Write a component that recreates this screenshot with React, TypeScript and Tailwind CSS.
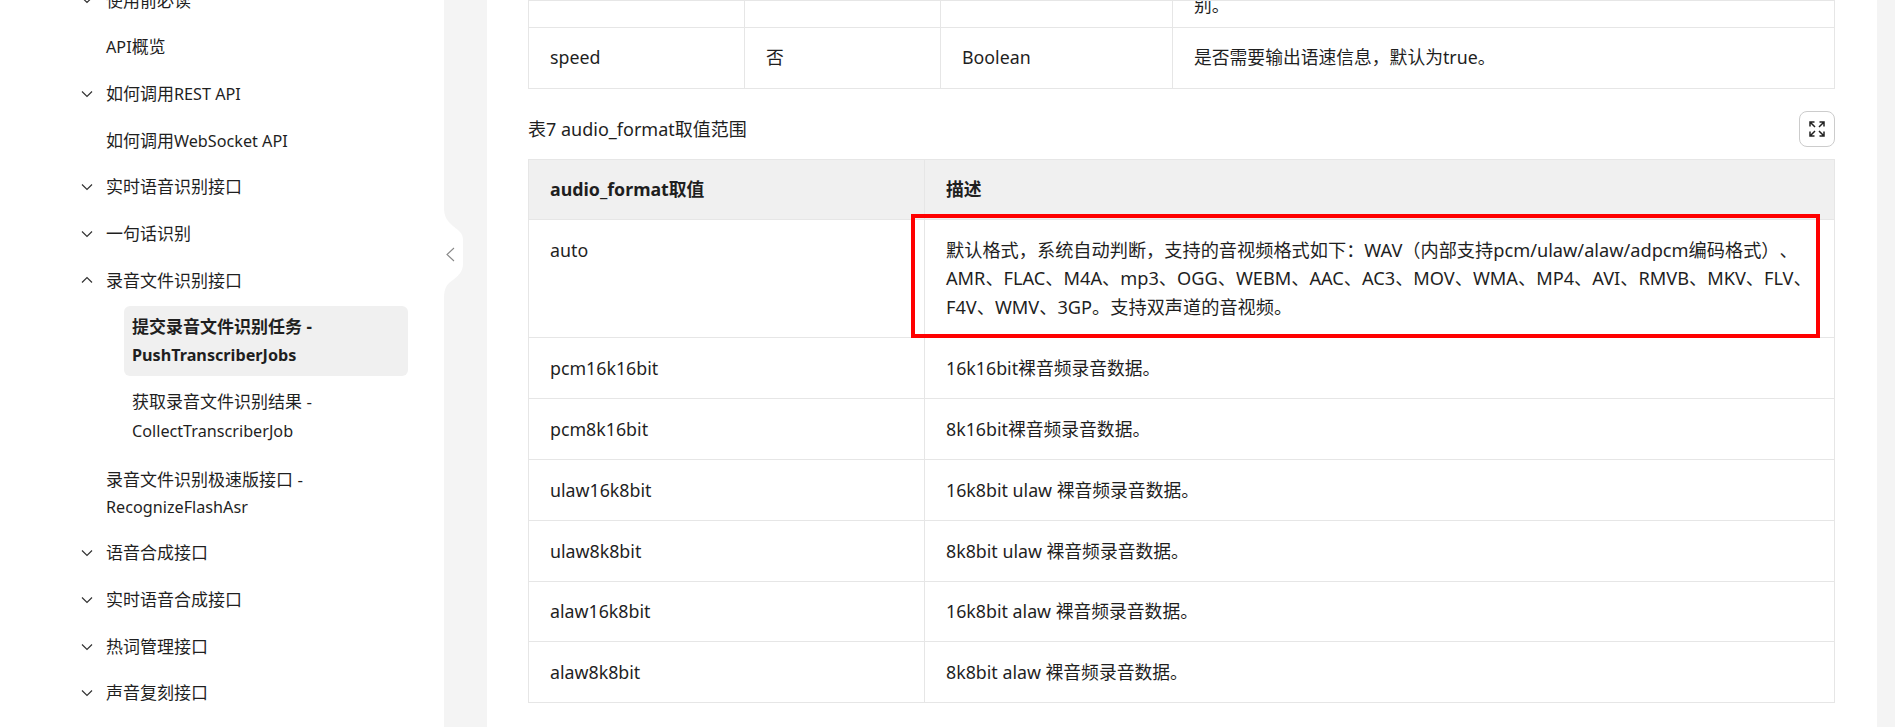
import React from "react";

const font = "font-['Noto_Sans','Noto_Sans_CJK_SC',sans-serif]";

function Chevron({ up }: { up?: boolean }) {
  return (
    <svg width="12" height="8" viewBox="0 0 12 8" fill="none" className="shrink-0" stroke="#333" strokeWidth="1.2">
      {up ? <path d="M1 6.5 L6 1.5 L11 6.5" /> : <path d="M1 1.5 L6 6.5 L11 1.5" />}
    </svg>
  );
}

function Latin({ children }: { children: React.ReactNode }) {
  return <span className="text-[16.2px]">{children}</span>;
}

function Item({ label, chevron, up }: { label: React.ReactNode; chevron?: boolean; up?: boolean }) {
  return (
    <div className="flex items-center h-[46.7px] pl-[81px]">
      <span className="w-[25px] flex">{chevron ? <Chevron up={up} /> : null}</span>
      <span>{label}</span>
    </div>
  );
}

function Sidebar() {
  return (
    <aside className="w-[444px] shrink-0 bg-white relative text-[17px] text-[#1f1f1f]">
      <div className="-mt-[23px] pr-[36px]">
        <Item label="使用前必读" chevron />
        <Item label={<><Latin>API</Latin>概览</>} />
        <Item label={<>如何调用<Latin>REST API</Latin></>} chevron />
        <Item label={<>如何调用<Latin>WebSocket API</Latin></>} />
        <Item label="实时语音识别接口" chevron />
        <Item label="一句话识别" chevron />
        <Item label="录音文件识别接口" chevron up />
        <div className="ml-[124px] mt-[2px] w-[284px] h-[70px] bg-[#f0f0f0] rounded-[6px] px-[8px] py-[7px] font-bold leading-[28px]">
          提交录音文件识别任务 - <Latin>PushTranscriberJobs</Latin>
        </div>
        <div className="ml-[124px] w-[284px] px-[8px] pt-[11px] pb-[10px] leading-[29px]">
          获取录音文件识别结果 - <Latin>CollectTranscriberJob</Latin>
        </div>
        <div className="pl-[106px] w-[420px] pt-[10px] pb-[8px] leading-[27.5px]">
          录音文件识别极速版接口 - <Latin>RecognizeFlashAsr</Latin>
        </div>
        <Item label="语音合成接口" chevron />
        <Item label="实时语音合成接口" chevron />
        <Item label="热词管理接口" chevron />
        <Item label="声音复刻接口" chevron />
      </div>
      <svg
        className="absolute left-[444px] top-[208px] z-10"
        width="20"
        height="90"
        viewBox="0 0 20 90"
        fill="#fff"
      >
        <path d="M0 0 C0 8 3 13 9 18 C15 23 19 25 19 32 L19 56 C19 64 14 68 9 72 C3 76 0 80 0 90 Z" />
        <path d="M10 40 L3 46.5 L10 53" fill="none" stroke="#888" strokeWidth="1.1" />
      </svg>
    </aside>
  );
}

function ExpandIcon() {
  return (
    <svg width="16" height="16" viewBox="0 0 16 16" fill="none" stroke="#222" strokeWidth="1.5">
      <path d="M1 5.5 V1 H5.5 M1 1 L6 6" />
      <path d="M15 5.5 V1 H10.5 M15 1 L10 6" />
      <path d="M1 10.5 V15 H5.5 M1 15 L6 10" />
      <path d="M15 10.5 V15 H10.5 M15 15 L10 10" />
    </svg>
  );
}

const rows: [string, string, string][] = [
  ["pcm16k16bit", "16k16bit裸音频录音数据。", "h-[61px]"],
  ["pcm8k16bit", "8k16bit裸音频录音数据。", "h-[61px]"],
  ["ulaw16k8bit", "16k8bit ulaw 裸音频录音数据。", "h-[61px]"],
  ["ulaw8k8bit", "8k8bit ulaw 裸音频录音数据。", "h-[61px]"],
  ["alaw16k8bit", "16k8bit alaw 裸音频录音数据。", "h-[60px]"],
  ["alaw8k8bit", "8k8bit alaw 裸音频录音数据。", "h-[61px]"],
];

const cell = "border border-[#e6e6e6] pl-[21px] pr-[21px] align-middle text-left";

function Main() {
  return (
    <main className="w-[1390px] shrink-0 bg-white pl-[41px] pr-[42px] text-[17.8px] text-[#1f1f1f]">
      <table className="w-full border-collapse table-fixed">
        <colgroup>
          <col className="w-[216px]" />
          <col className="w-[196px]" />
          <col className="w-[232px]" />
          <col />
        </colgroup>
        <tbody>
          <tr className="h-[27px]">
            <td className={cell}></td>
            <td className={cell}></td>
            <td className={cell}></td>
            <td className={`${cell} align-bottom`}>
              <div className="-mt-[10px] h-[16px] leading-[8px] overflow-hidden">别。</div>
            </td>
          </tr>
          <tr className="h-[61px]">
            <td className={`${cell} pb-[2px]`}>speed</td>
            <td className={`${cell} pb-[2px]`}>否</td>
            <td className={`${cell} pb-[2px]`}>Boolean</td>
            <td className={`${cell} pb-[2px]`}>是否需要输出语速信息，默认为true。</td>
          </tr>
        </tbody>
      </table>

      <div className="flex items-center justify-between h-[70px] pt-[22px] pb-[12px]">
        <span className="text-[18px]">表7 audio_format取值范围</span>
        <button className="w-[36px] h-[36px] rounded-[8px] border border-[#cccccc] flex items-center justify-center bg-white">
          <ExpandIcon />
        </button>
      </div>

      <div className="relative">
        <table className="w-full border-collapse table-fixed">
          <colgroup>
            <col className="w-[396px]" />
            <col />
          </colgroup>
          <thead>
            <tr className="h-[60px] bg-[#f0f0f0]">
              <th className={`${cell} font-bold`}>audio_format取值</th>
              <th className={`${cell} font-bold`}>描述</th>
            </tr>
          </thead>
          <tbody>
            <tr className="h-[118px]">
              <td className={`${cell} align-top pt-[17px]`}>auto</td>
              <td className={`${cell} text-[18.2px] leading-[28.4px] [text-spacing-trim:space-all]`}>
                默认格式，系统自动判断，支持的音视频格式如下：WAV（内部支持pcm/ulaw/alaw/adpcm编码格式）、AMR、FLAC、M4A、mp3、OGG、WEBM、AAC、AC3、MOV、WMA、MP4、AVI、RMVB、MKV、FLV、F4V、WMV、3GP。支持双声道的音视频。
              </td>
            </tr>
            {rows.map(([a, b, h]) => (
              <tr key={a} className={h}>
                <td className={cell}>{a}</td>
                <td className={cell}>{b}</td>
              </tr>
            ))}
          </tbody>
        </table>
        <div className="absolute left-[383px] top-[55px] w-[909px] h-[124px] border-[4px] border-[#ff0000] pointer-events-none" />
      </div>
    </main>
  );
}

export default function App() {
  return (
    <div className={`flex h-[727px] w-[1895px] overflow-hidden bg-[#f4f4f4] ${font}`}>
      <Sidebar />
      <div className="w-[43px] shrink-0" />
      <Main />
    </div>
  );
}
